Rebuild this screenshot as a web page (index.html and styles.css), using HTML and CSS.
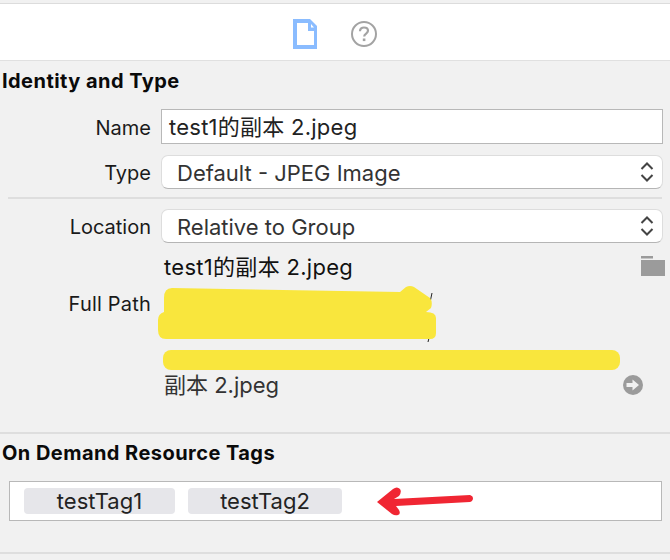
FILE: index.html
```html
<!DOCTYPE html>
<html lang="en">
<head>
<meta charset="utf-8">
<title>Identity and Type</title>
<link rel="stylesheet" href="styles.css">
</head>
<body>
<div class="inspector">
  <div class="tabs">
    <svg class="tab-icon" width="24" height="30" viewBox="0 0 24 30"><path d="M0 0h17l7 7v23H0z" fill="#8abcff"/><path d="M4 4h11v8h6v14H4z" fill="#fff"/><path d="M18 5l3 3.500h-3z" fill="#fff"/></svg>
    <svg class="tab-icon" width="26" height="26" viewBox="0 0 26 26"><circle cx="13" cy="13" r="12" fill="none" stroke="#a3a3a3" stroke-width="2"/><path d="M9 10.200c0-2.400 1.800-3.700 4-3.700s4 1.300 4 3.300c0 2.800-3.800 2.700-3.800 5.700" fill="none" stroke="#a3a3a3" stroke-width="2.200"/><rect x="11.800" y="17.500" width="2.600" height="2.600" fill="#a3a3a3"/></svg>
  </div>

  <section class="identity">
    <h2 class="title">Identity and Type</h2>
    <div class="row row-name">
      <span class="label">Name</span>
      <div class="field">test1的副本 2.jpeg</div>
    </div>
    <div class="row row-type">
      <span class="label">Type</span>
      <div class="select">Default - JPEG Image
        <svg class="chev" width="14" height="22" viewBox="0 0 14 22"><path d="M1.500 8L7 2.500 12.500 8M1.500 14L7 19.500 12.500 14" fill="none" stroke="#444" stroke-width="2"/></svg>
      </div>
    </div>
    <div class="divider"></div>
    <div class="row row-location">
      <span class="label">Location</span>
      <div class="select">Relative to Group
        <svg class="chev" width="14" height="22" viewBox="0 0 14 22"><path d="M1.500 8L7 2.500 12.500 8M1.500 14L7 19.500 12.500 14" fill="none" stroke="#444" stroke-width="2"/></svg>
      </div>
    </div>
    <div class="row row-file">
      <span class="label"></span>
      <div class="value value-file">test1的副本 2.jpeg</div>
      <svg class="folder" width="24" height="20" viewBox="0 0 24 20"><path d="M0 0h12v2.500H0zM0 4h12V4h12v16H0z" fill="#9b9b9b"/></svg>
    </div>
    <div class="row row-path">
      <span class="label">Full Path</span>
      <div class="path-lines"></div>
    </div>
    <div class="row row-last">
      <span class="label"></span>
      <div class="value value-dim">副本 2.jpeg</div>
      <svg class="go" width="20" height="20" viewBox="0 0 20 20"><circle cx="10" cy="10" r="10" fill="#9b9b9b"/><path d="M3.500 8h6V4.500L16 10l-6.500 5.500V12h-6z" fill="#f1f1f1"/></svg>
    </div>
  </section>

  <section class="tags-section">
    <h2 class="title">On Demand Resource Tags</h2>
    <div class="tags">
      <span class="tag tag-one">testTag1</span>
      <span class="tag tag-two">testTag2</span>
    </div>
  </section>
</div>

<svg class="markup" width="670" height="560" viewBox="0 0 670 560">
  <path d="M432 293l-3 14M430 334l-2 8" stroke="#222" stroke-width="1" fill="none"/>
  <path d="M172 288L400 292L406 287Q410 285 414 287L430 298Q433 302 431 308L426 312Q436 312 436 318V333Q436 339 430 339H166Q158 339 158 330V320Q158 314 164 312L164 298Q164 288 172 288Z" fill="#f9e63d"/>
  <rect x="163" y="350" width="457" height="20" rx="8" fill="#f9e63d"/>
  <path d="M377 502L393 489Q397 486 400 489Q402 492 399 496L394 499L470 495Q473 496 473 498Q473 501 470 502L396 506L399 510Q401 514 398 515Q395 516 392 514Z" fill="#f02633"/>
</svg>
</body>
</html>
```
FILE: styles.css
```css
* { box-sizing: border-box; }
html, body { margin: 0; padding: 0; }
body {
  width: 670px;
  height: 560px;
  overflow: hidden;
  position: relative;
  background: #f1f1f1;
  font-family: Inter, "Noto Sans CJK SC", sans-serif;
  font-size: 19px;
  color: #222;
}
.inspector { display: flex; flex-direction: column; height: 560px; padding-top: 3px; }
.tabs {
  height: 58px;
  background: #fff;
  border-top: 1px solid #dcdcdc;
  border-bottom: 1px solid #e0e0e0;
  display: flex;
  align-items: center;
  justify-content: center;
  gap: 34px;
  padding-top: 3px;
}
.title {
  margin: 0;
  font-size: 20px;
  line-height: 24px;
  font-weight: 700;
  letter-spacing: 0.45px;
  color: #0a0a0a;
  padding-left: 2px;
}
.identity { height: 373px; border-bottom: 2px solid #dedede; padding-top: 8px; }
.row { display: flex; align-items: center; padding-right: 7px; }
.label {
  width: 151px;
  flex: none;
  text-align: right;
  font-size: 20px;
  padding-top: 2px;
  color: #1a1a1a;
}
.row-path .label { letter-spacing: 0.2px; padding-top: 0; }
.field, .select {
  margin-left: 10px;
  flex: 1;
  background: #fff;
  color: #333;
  font-size: 22px;
}
.field {
  height: 35px;
  border: 1px solid #b8b8b8;
  line-height: 35px;
  padding-left: 7px;
  letter-spacing: 0.25px;
  color: #222;
}
.select {
  height: 34px;
  border-radius: 7px;
  border: 1px solid #ddd;
  border-bottom: 1px solid #b5b5b5;
  padding: 2px 8px 0 15px;
  display: flex;
  align-items: center;
  justify-content: space-between;
}
.chev { flex: none; margin-top: -2px; }
.row-name { margin-top: 16px; }
.row-type { margin-top: 11px; }
.divider { height: 2px; background: #dedede; margin: 8px 8px 0 8px; }
.row-location { margin-top: 10px; }
.row-file { margin-top: 8px; height: 32px; }
.value {
  margin-left: 13px;
  flex: 1;
  font-size: 22px;
  color: #111;
  margin-top: -4px;
}
.value-file { letter-spacing: 0.3px; }
.value-dim { color: #333; margin-top: 2px; }
.folder { margin-top: -2px; margin-right: -2px; }
.row-path { height: 70px; align-items: flex-start; padding-top: 9px; }
.path-lines { flex: 1; }
.row-last { margin-top: 13px; height: 32px; }
.go { margin-right: 20px; margin-top: 6px; }
.tags-section { padding-top: 7px; }
.tags {
  margin: 16px 8px 0 9px;
  height: 40px;
  background: #fff;
  border: 1px solid #b8b8b8;
  display: flex;
  align-items: center;
  padding-left: 14px;
  gap: 13px;
}
.tag {
  height: 26px;
  border-radius: 4px;
  background: #e6e6ea;
  display: flex;
  align-items: center;
  justify-content: center;
  font-size: 22px;
  color: #222;
}
.tag-one { width: 151px; }
.tag-two { width: 154px; }
.tags-section { height: 120px; border-bottom: 2px solid #dedede; }
.markup { position: absolute; left: 0; top: 0; pointer-events: none; }
```
